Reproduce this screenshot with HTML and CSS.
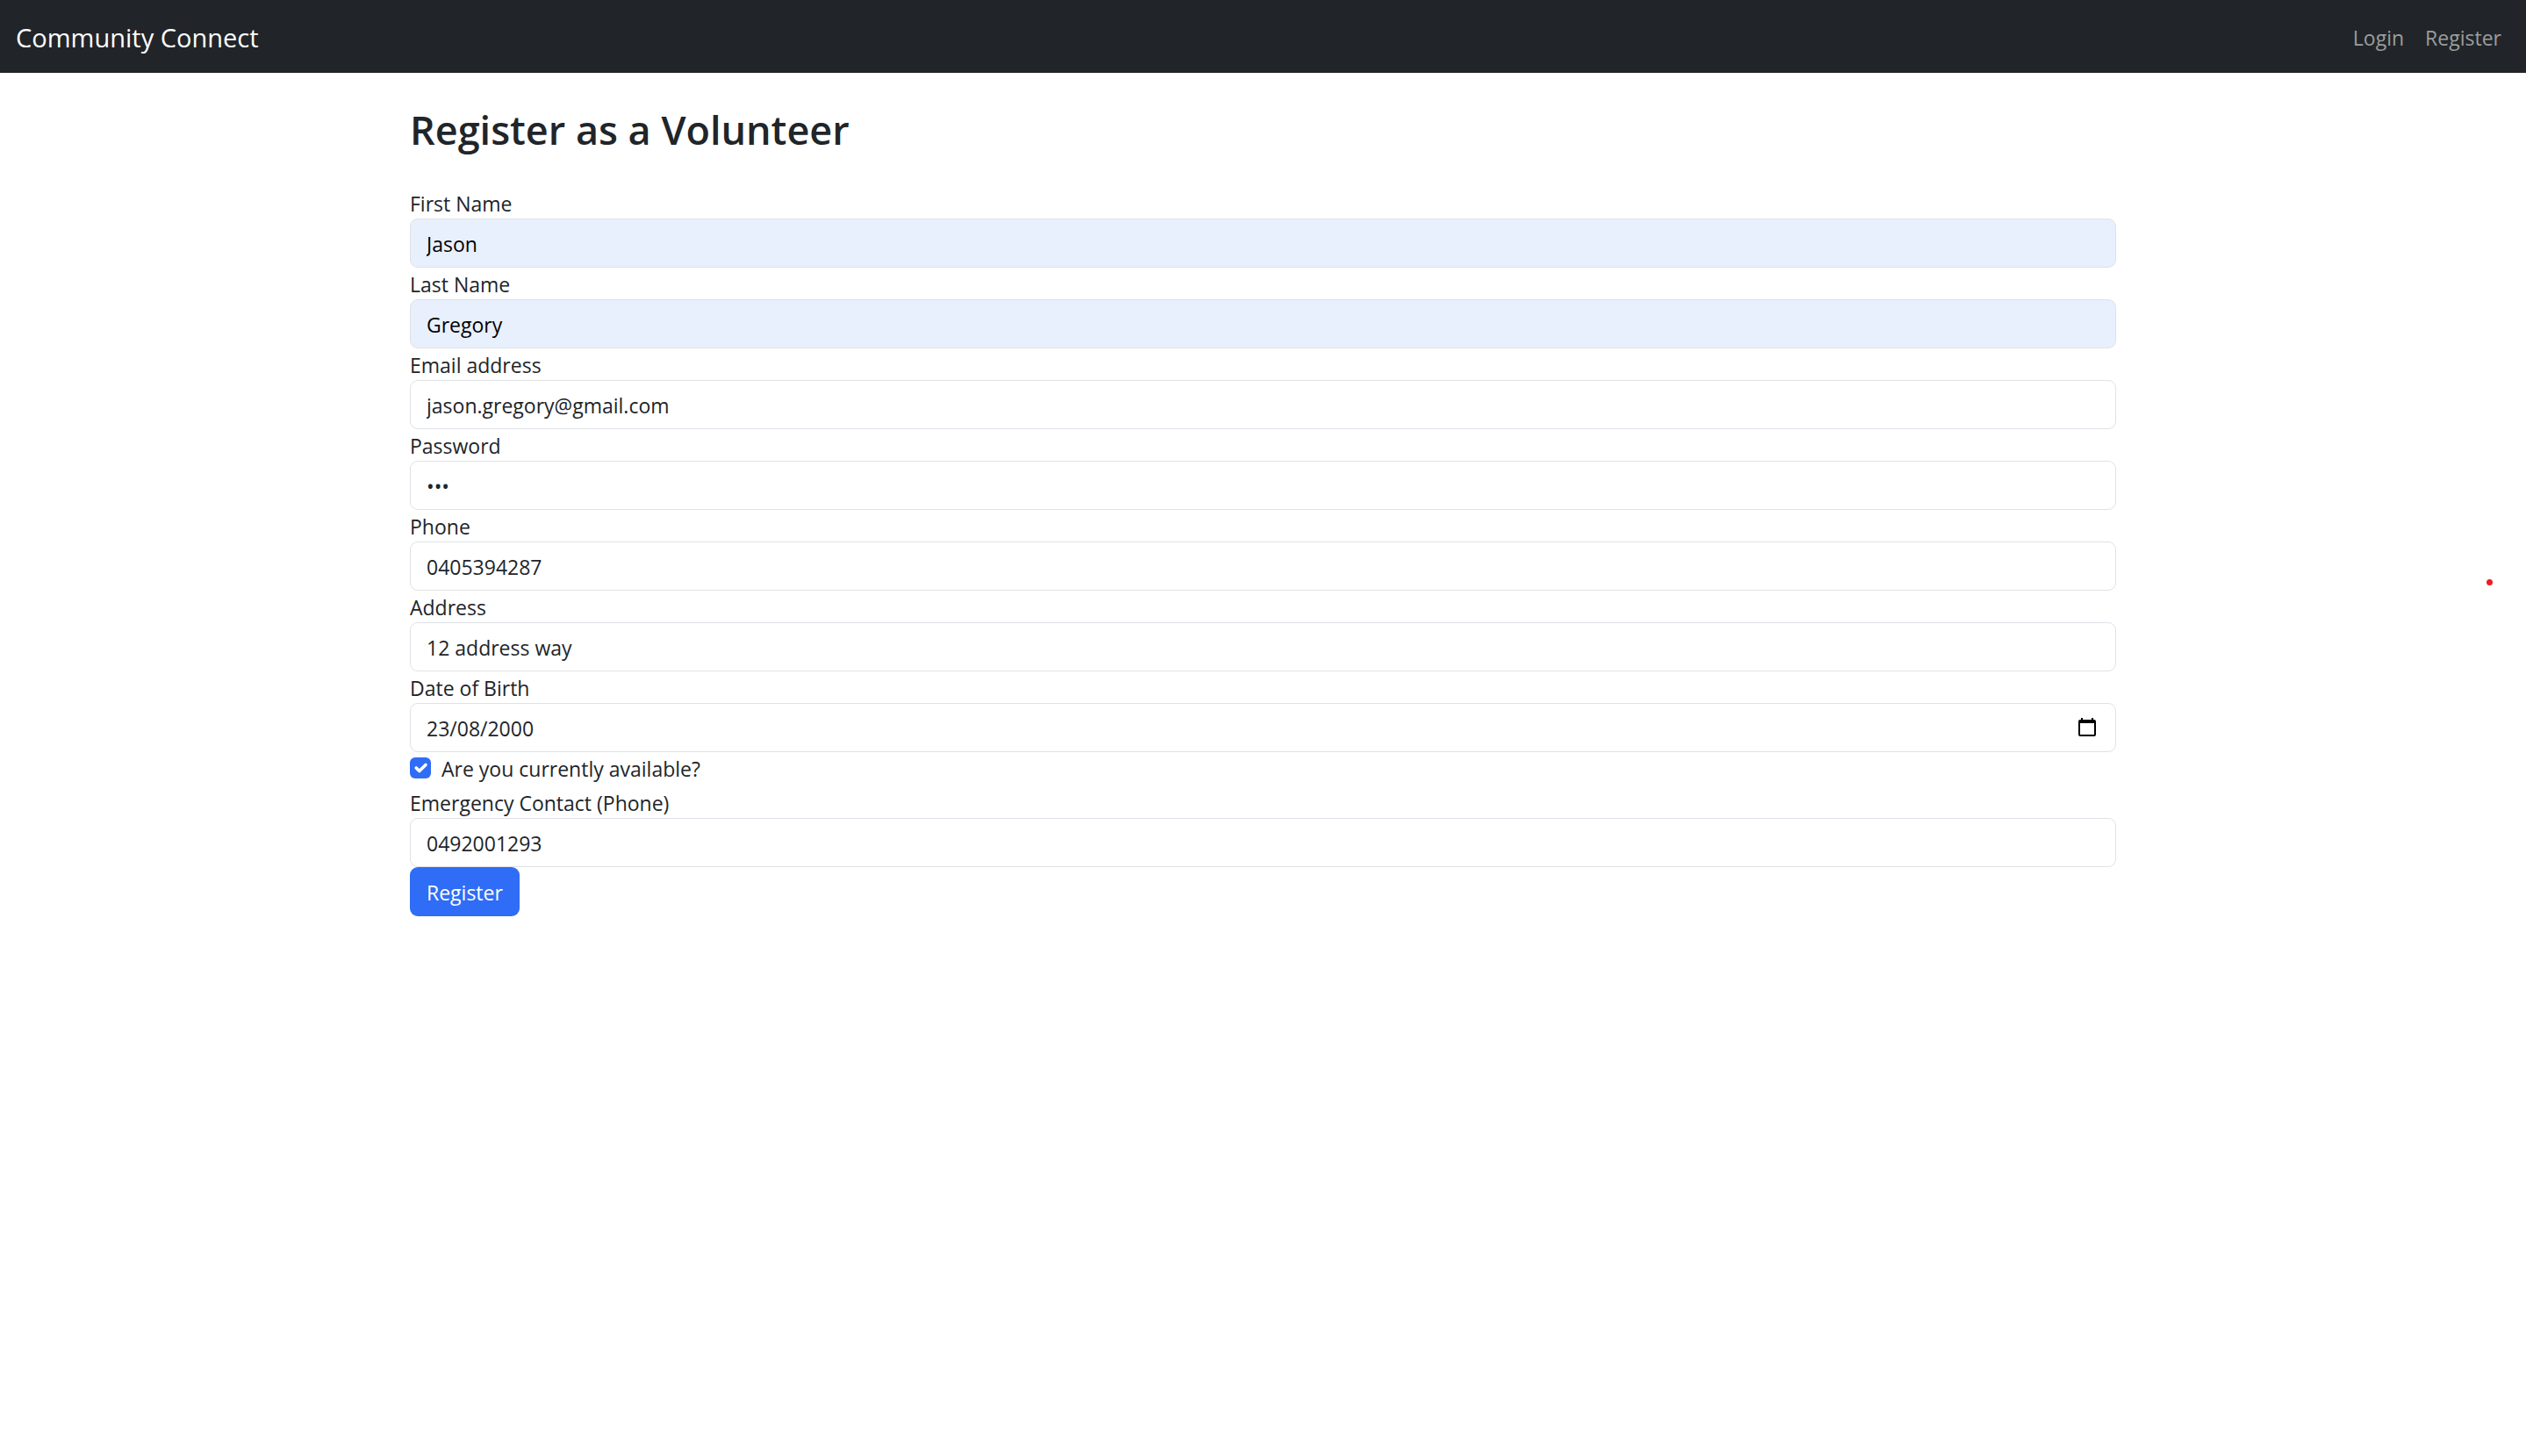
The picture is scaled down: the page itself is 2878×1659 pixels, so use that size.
FILE: index.html
```html
<!DOCTYPE html>
<html lang="en-AU">
<head>
  <meta charset="utf-8">
  <meta name="viewport" content="width=device-width, initial-scale=1">
  <title>Register - Community Connect</title>
  <link rel="stylesheet" href="styles.css">
</head>
<body>
  <nav class="navbar">
    <a class="navbar-brand" href="#">Community Connect</a>
    <div class="navbar-links">
      <a class="nav-link" href="#">Login</a>
      <a class="nav-link" href="#">Register</a>
    </div>
  </nav>

  <main class="container">
    <h1 class="title">Register as a Volunteer</h1>
    <form class="form">
      <label class="form-label" for="first-name">First Name</label>
      <input class="form-control autofilled" id="first-name" type="text" value="Jason">

      <label class="form-label" for="last-name">Last Name</label>
      <input class="form-control autofilled" id="last-name" type="text" value="Gregory">

      <label class="form-label" for="email">Email address</label>
      <input class="form-control" id="email" type="email" value="jason.gregory@gmail.com">

      <label class="form-label" for="password">Password</label>
      <input class="form-control" id="password" type="password" value="abc">

      <label class="form-label" for="phone">Phone</label>
      <input class="form-control" id="phone" type="tel" value="0405394287">

      <label class="form-label" for="address">Address</label>
      <input class="form-control" id="address" type="text" value="12 address way">

      <label class="form-label" for="dob">Date of Birth</label>
      <div class="form-control date-control">
        <input class="date-input" id="dob" type="text" value="23/08/2000">
        <button class="date-button" type="button" aria-label="Open calendar">
          <svg class="date-icon" viewBox="0 0 20 21" aria-hidden="true">
            <path fill-rule="evenodd" d="M3 0h2v2h10V0h2v2h1q2 0 2 2v15q0 2-2 2H2q-2 0-2-2V4q0-2 2-2h1zM2 6v13h16V6z"/>
          </svg>
        </button>
      </div>

      <div class="form-check">
        <input class="check-input" id="available" type="checkbox" checked>
        <label class="form-label" for="available">Are you currently available?</label>
      </div>

      <label class="form-label" for="emergency">Emergency Contact (Phone)</label>
      <input class="form-control" id="emergency" type="tel" value="0492001293">

      <button class="submit" type="submit">Register</button>
    </form>
  </main>
  <span class="marker" aria-hidden="true"></span>
</body>
</html>
```
FILE: styles.css
```css
*,
*::before,
*::after {
  box-sizing: border-box;
}

body {
  position: relative;
  margin: 0;
  background: #fff;
  color: #212529;
  font-family: "Segoe UI", "Open Sans", "Noto Sans", sans-serif;
  font-size: 23px;
  line-height: 36px;
}

input,
button {
  margin: 0;
  color: inherit;
  font: inherit;
}

.navbar {
  display: flex;
  align-items: center;
  justify-content: space-between;
  padding: 20px 28px 18px 18px;
  background: #212529;
}

.navbar-brand {
  color: #fff;
  font-size: 29px;
  line-height: 45px;
  text-decoration: none;
}

.navbar-links {
  display: flex;
  gap: 24px;
}

.nav-link {
  color: #9b9d9e;
  text-decoration: none;
}

.container {
  width: 100%;
  max-width: 1980px;
  margin: 0 auto;
  padding: 36px 18px;
}

.title {
  margin: 0 0 36px;
  font-size: 45px;
  font-weight: 600;
  line-height: 58px;
}

.form {
  display: flex;
  flex-direction: column;
}

.form-label {
  padding-top: 2px;
  line-height: 34px;
}

.form-control {
  width: 100%;
  height: 56px;
  padding: 11px 18px 9px;
  border: 1px solid #dee2e6;
  border-radius: 9px;
  background: #fff;
}

.autofilled {
  background: #e8f0fe;
  color: #000;
}

.date-control {
  display: flex;
  align-items: flex-start;
  padding-right: 22px;
}

.date-input {
  flex: 1;
  min-width: 0;
  height: 34px;
  padding: 0;
  border: 0;
  background: none;
}

.date-button {
  display: flex;
  padding: 5px 0;
  border: 0;
  background: none;
}

.date-icon {
  width: 20px;
  height: 21px;
}

.form-check {
  display: flex;
  align-items: center;
  gap: 12px;
  margin-bottom: 3px;
}

.check-input {
  width: 24px;
  height: 24px;
  border-radius: 6px;
  appearance: none;
  background: #fff;
}

.check-input:checked {
  background: #306df6 url("data:image/svg+xml,%3Csvg xmlns='http://www.w3.org/2000/svg' viewBox='0 0 20 20'%3E%3Cpath fill='none' stroke='%23fff' stroke-linecap='round' stroke-linejoin='round' stroke-width='3' d='m6 10 3 3 6-6'/%3E%3C/svg%3E") center / contain no-repeat;
}

.submit {
  align-self: flex-start;
  padding: 11px 19px 9px;
  border: 0;
  border-radius: 9px;
  background: #306df6;
  color: #fff;
}

/* Recording marker floating over the page */
.marker {
  position: absolute;
  top: 660px;
  right: 38px;
  width: 7px;
  height: 7px;
  border-radius: 50%;
  background: #ed1c24;
}
```
